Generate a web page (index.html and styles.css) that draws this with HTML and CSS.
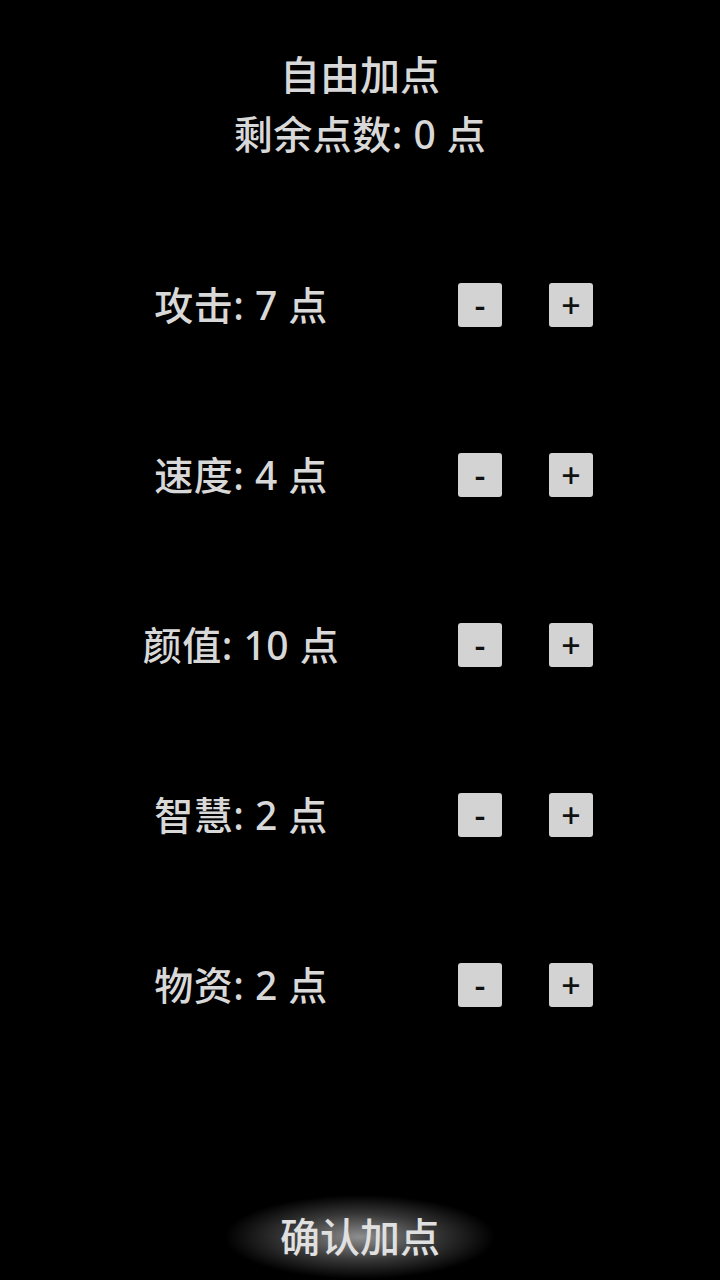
FILE: index.html
```html
<!DOCTYPE html>
<html lang="zh-CN">
<head>
  <meta charset="UTF-8">
  <meta name="viewport" content="width=device-width, initial-scale=1.0">
  <title>自由加点</title>
  <link rel="stylesheet" href="styles.css">
</head>
<body>
  <div class="page">
    <div class="header">
      <div class="title">自由加点</div>
      <div class="remain">剩余点数: <span id="remain">0</span> 点</div>
    </div>

    <div class="stats">
      <div class="stat-row">
        <div class="stat-label">攻击: 7 点</div>
        <button class="btn minus">-</button>
        <button class="btn plus">+</button>
      </div>
      <div class="stat-row">
        <div class="stat-label">速度: 4 点</div>
        <button class="btn minus">-</button>
        <button class="btn plus">+</button>
      </div>
      <div class="stat-row">
        <div class="stat-label">颜值: 10 点</div>
        <button class="btn minus">-</button>
        <button class="btn plus">+</button>
      </div>
      <div class="stat-row">
        <div class="stat-label">智慧: 2 点</div>
        <button class="btn minus">-</button>
        <button class="btn plus">+</button>
      </div>
      <div class="stat-row">
        <div class="stat-label">物资: 2 点</div>
        <button class="btn minus">-</button>
        <button class="btn plus">+</button>
      </div>
    </div>

    <div class="footer">
      <div class="confirm">确认加点</div>
    </div>
  </div>
</body>
</html>
```

FILE: styles.css
```css
/* Base */
html, body {
  margin: 0;
  padding: 0;
  background-color: #000;
}
body {
  font-family: "Noto Sans", "Noto Sans CJK SC", sans-serif;
  font-weight: 500;
  color: #d8d8d8;
}
.page {
  width: 720px;
  height: 1280px;
  display: flex;
  flex-direction: column;
}

/* Header */
.header {
  padding-top: 51px;
  text-align: center;
}
.title {
  font-size: 40px;
  line-height: 48px;
}
.remain {
  margin-top: 12px;
  font-size: 39px;
  line-height: 46px;
  letter-spacing: 0.5px;
}

/* Stat rows */
.stats {
  margin-top: 63px;
}
.stat-row {
  height: 170px;
  display: flex;
  align-items: center;
}
.stat-label {
  width: 400px;
  margin-left: 41px;
  text-align: center;
  font-size: 39px;
  line-height: 46px;
  letter-spacing: 0.5px;
}
.btn {
  width: 44px;
  height: 44px;
  padding: 0;
  border: none;
  border-radius: 3px;
  background-color: #d3d3d3;
  color: #111;
  font-family: "Noto Sans", sans-serif;
  font-size: 34px;
  font-weight: 500;
  line-height: 44px;
  cursor: pointer;
}
.btn.minus {
  margin-left: 17px;
}
.btn.plus {
  margin-left: 47px;
}

/* Confirm */
.footer {
  margin-top: auto;
  display: flex;
  justify-content: center;
  padding-bottom: 1px;
}
.confirm {
  padding: 22px 55px;
  font-size: 40px;
  line-height: 40px;
  color: #e0e0e0;
  background: radial-gradient(ellipse closest-side, rgba(150, 150, 150, 0.95), rgba(100, 100, 100, 0.55) 55%, rgba(0, 0, 0, 0) 100%);
  cursor: pointer;
}
```
